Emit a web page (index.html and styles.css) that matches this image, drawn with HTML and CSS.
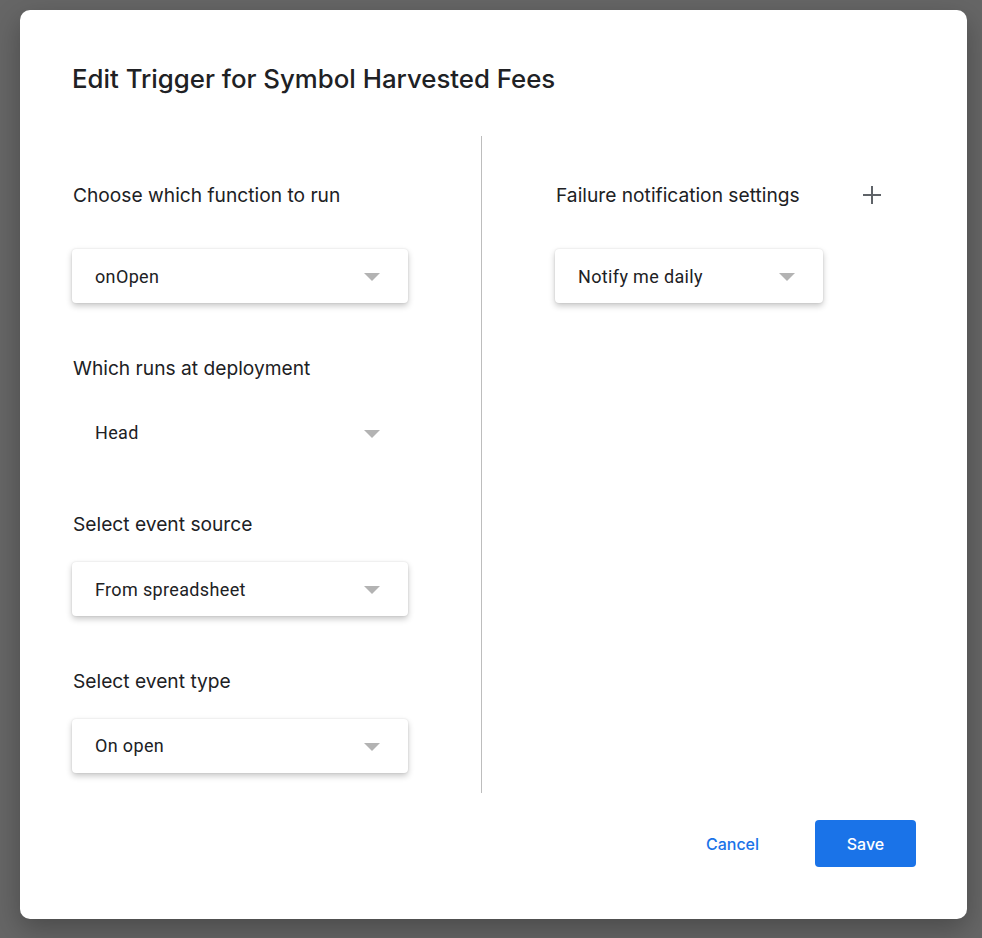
FILE: index.html
```html
<!DOCTYPE html>
<html lang="en">
<head>
<meta charset="utf-8">
<title>Edit Trigger</title>
<link rel="stylesheet" href="styles.css">
</head>
<body>
<div class="dialog">
  <h1 class="title">Edit Trigger for Symbol Harvested Fees</h1>
  <div class="columns">
    <div class="col-left">
      <div class="field field-first">
        <div class="label">Choose which function to run</div>
        <div class="select raised select-wide select-first"><span>onOpen</span><i class="arrow"></i></div>
      </div>
      <div class="field">
        <div class="label">Which runs at deployment</div>
        <div class="select select-wide"><span>Head</span><i class="arrow"></i></div>
      </div>
      <div class="field">
        <div class="label">Select event source</div>
        <div class="select raised select-wide"><span>From spreadsheet</span><i class="arrow"></i></div>
      </div>
      <div class="field">
        <div class="label">Select event type</div>
        <div class="select raised select-wide"><span>On open</span><i class="arrow"></i></div>
      </div>
    </div>
    <div class="col-right">
      <div class="field field-first">
        <div class="label-row">
          <div class="label">Failure notification settings</div>
          <svg class="plus" width="20" height="20" viewBox="0 0 20 20" aria-hidden="true"><path d="M10 1v18M1 10h18" stroke="#5f6368" stroke-width="2" fill="none"/></svg>
        </div>
        <div class="select raised select-narrow select-first"><span>Notify me daily</span><i class="arrow"></i></div>
      </div>
    </div>
  </div>
  <div class="footer">
    <button class="btn btn-text">Cancel</button>
    <button class="btn btn-primary">Save</button>
  </div>
</div>
</body>
</html>
```

FILE: styles.css
```css
html, body {
  margin: 0;
  padding: 0;
}
body {
  background: #666666;
  width: 982px;
  height: 938px;
  overflow: hidden;
  font-family: Inter, "Open Sans", Arial, sans-serif;
  color: #202124;
}
.dialog {
  box-sizing: border-box;
  margin: 10px 0 0 20px;
  width: 947px;
  height: 909px;
  background: #ffffff;
  border-radius: 10px;
  box-shadow: 0 10px 28px rgba(0, 0, 0, 0.28);
  padding: 54px 51px 52px 52px;
  display: flex;
  flex-direction: column;
}
.title {
  margin: 0;
  font-size: 25.8px;
  line-height: 30px;
  font-weight: 500;
  color: #202124;
}
.columns {
  display: flex;
  margin-top: 42px;
  height: 657px;
}
.col-left {
  width: 410px;
  box-sizing: border-box;
  border-right: 1px solid #bdbdbd;
  padding-top: 47px;
}
.col-right {
  flex: 1;
  padding-top: 47px;
  padding-left: 73px;
}
.field {
  margin-top: 52.5px;
}
.field.field-first {
  margin-top: 0;
}
.label {
  font-size: 19.2px;
  line-height: 24px;
  color: #202124;
  padding-left: 1px;
}
.label-row {
  display: flex;
  align-items: center;
  justify-content: space-between;
  width: 327px;
}
.plus {
  display: block;
}
.select {
  box-sizing: border-box;
  height: 54px;
  margin-top: 26px;
  border-radius: 4px;
  background: #fff;
  display: flex;
  align-items: center;
  justify-content: space-between;
  padding: 0 28px 0 23px;
  font-family: Roboto, Arial, sans-serif;
  font-size: 18px;
  letter-spacing: 0.35px;
  color: #202124;
}
.select.select-first {
  margin-top: 42px;
}
.select.raised {
  box-shadow: 0 3px 6px rgba(0, 0, 0, 0.22), 0 0 2px rgba(0, 0, 0, 0.12);
}
.select-wide {
  width: 336px;
}
.select-narrow {
  width: 268px;
}
.arrow {
  display: block;
  width: 0;
  height: 0;
  border-left: 8px solid transparent;
  border-right: 8px solid transparent;
  border-top: 8px solid #b3b3b3;
  margin-top: 2px;
}
.footer {
  margin-top: auto;
  display: flex;
  justify-content: flex-end;
  align-items: center;
}
.btn {
  font-family: Inter, "Open Sans", Arial, sans-serif;
  font-size: 16px;
  font-weight: 500;
  border: none;
  border-radius: 4px;
  height: 47px;
  padding: 0;
  cursor: pointer;
}
.btn-text {
  background: transparent;
  color: #1a73e8;
  width: 101px;
  margin-right: 32px;
}
.btn-primary {
  background: #1a73e8;
  color: #fff;
  width: 101px;
}
```
